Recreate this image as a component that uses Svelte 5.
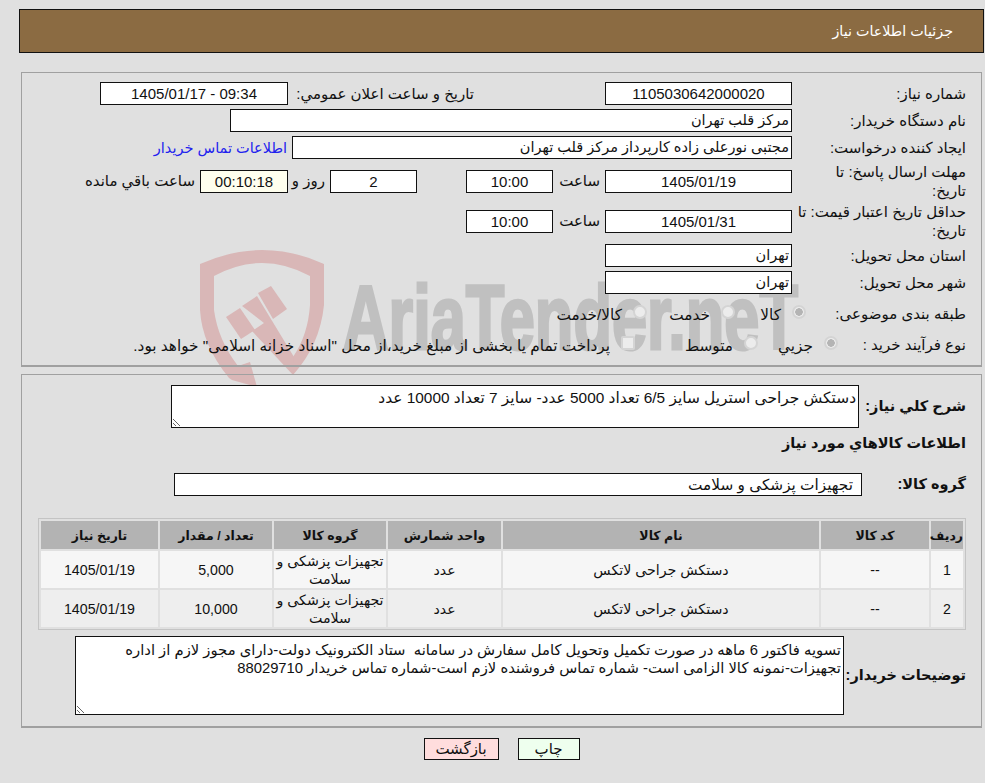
<script>
	const items = [
		{ row: 1, code: '--', name: 'دستکش جراحی لاتکس', unit: 'عدد', group: 'تجهیزات پزشکی و سلامت', qty: '5,000', date: '1405/01/19' },
		{ row: 2, code: '--', name: 'دستکش جراحی لاتکس', unit: 'عدد', group: 'تجهیزات پزشکی و سلامت', qty: '10,000', date: '1405/01/19' }
	];
	const summary = 'دستکش جراحی استریل سایز 6/5 تعداد 5000 عدد- سایز 7 تعداد 10000 عدد';
	const notes = 'تسویه فاکتور 6 ماهه در صورت تکمیل وتحویل کامل سفارش در سامانه  ستاد الکترونیک دولت-دارای مجوز لازم از اداره تجهیزات-نمونه کالا الزامی است- شماره تماس فروشنده لازم است-شماره تماس خریدار 88029710';
</script>

<div class="page">
	<svg class="watermark" width="985" height="783" viewBox="0 0 985 783" aria-hidden="true">
		<g fill="#d9b7b7">
			<path d="M200 264 Q232 250 262 250 Q294 250 324 264 L324 305 Q320 345 293 375 L293 357 Q308 335 310 305 L310 276 Q286 263 262 263 Q238 263 214 276 L214 310 Q218 340 238 366 L250 362 L257 387 L232 380 L229 378 Q202 345 200 310 Z" />
			<path d="M226 317 L240 308 L255 330 L241 339 Z" />
			<path d="M242 306 L257 296 L294 357 L293 375 L252 331 L264 323 Z" />
			<path d="M258 293 L271 286 L287 309 L273 319 Z" />
		</g>
		<text x="343" y="349" class="wm-text" textLength="455" lengthAdjust="spacingAndGlyphs">AriaTender.neT</text>
	</svg>

	<div class="content">
		<header class="topbar">جزئیات اطلاعات نیاز</header>

		<section class="panel first">
			<div class="row h27">
				<div class="label">شماره نیاز:</div>
				<div class="box w187 center">1105030642000020</div>
				<div class="label-inline announce">تاریخ و ساعت اعلان عمومي:</div>
				<div class="box w188 center">09:34 - 1405/01/17</div>
			</div>
			<div class="row h27">
				<div class="label">نام دستگاه خریدار:</div>
				<div class="box buyer">مرکز قلب تهران</div>
			</div>
			<div class="row h27">
				<div class="label">ایجاد کننده درخواست:</div>
				<div class="box creator">مجتبی نورعلی زاده کارپرداز مرکز قلب تهران</div>
				<span class="link">اطلاعات تماس خریدار</span>
			</div>
			<div class="row h40">
				<div class="label">مهلت ارسال پاسخ: تا<br />تاریخ:</div>
				<div class="box w187 center">1405/01/19</div>
				<div class="hour">ساعت</div>
				<div class="box w87 center">10:00</div>
				<div class="spacer"></div>
				<div class="box w87 center">2</div>
				<div class="days">روز و</div>
				<div class="box w88 center remain">00:10:18</div>
				<div class="left">ساعت باقي مانده</div>
			</div>
			<div class="row h40">
				<div class="label">حداقل تاریخ اعتبار قیمت: تا<br />تاریخ:</div>
				<div class="box w187 center">1405/01/31</div>
				<div class="hour">ساعت</div>
				<div class="box w87 center">10:00</div>
			</div>
			<div class="row h28">
				<div class="label">استان محل تحویل:</div>
				<div class="box w187">تهران</div>
			</div>
			<div class="row h27">
				<div class="label">شهر محل تحویل:</div>
				<div class="box w187">تهران</div>
			</div>
			<div class="row h34">
				<div class="label">طبقه بندی موضوعی:</div>
				<div class="choices cat">
					<label><span class="radio on"></span>کالا</label>
					<label><span class="radio"></span>خدمت</label>
					<label><span class="radio"></span>کالا/خدمت</label>
				</div>
			</div>
			<div class="row h28">
				<div class="label">نوع فرآیند خرید :</div>
				<div class="choices proc">
					<label><span class="radio on"></span>جزيي</label>
					<label><span class="radio"></span>متوسط</label>
					<label><span class="check"></span>پرداخت تمام یا بخشی از مبلغ خرید،از محل "اسناد خزانه اسلامی" خواهد بود.</label>
				</div>
			</div>
		</section>

		<section class="panel second">
			<div class="row summary-row">
				<div class="label strong">شرح کلي نیاز:</div>
				<textarea class="area summary" readonly value={summary}></textarea>
			</div>
			<h3 class="goods-title">اطلاعات کالاهاي مورد نیاز</h3>
			<div class="row group-row">
				<div class="label strong">گروه کالا:</div>
				<div class="box group">تجهیزات پزشکی و سلامت</div>
			</div>

			<table class="goods">
				<thead>
					<tr>
						<th class="c1">ردیف</th>
						<th class="c2">کد کالا</th>
						<th class="c3">نام کالا</th>
						<th class="c4">واحد شمارش</th>
						<th class="c5">گروه کالا</th>
						<th class="c6">تعداد / مقدار</th>
						<th class="c7">تاریخ نیاز</th>
					</tr>
				</thead>
				<tbody>
					{#each items as item}
						<tr>
							<td>{item.row}</td>
							<td>{item.code}</td>
							<td>{item.name}</td>
							<td>{item.unit}</td>
							<td>{item.group}</td>
							<td>{item.qty}</td>
							<td>{item.date}</td>
						</tr>
					{/each}
				</tbody>
			</table>

			<div class="row notes-row">
				<div class="label strong">توضیحات خریدار:</div>
				<textarea class="area notes" readonly value={notes}></textarea>
			</div>
		</section>

		<div class="actions">
			<button class="print">چاپ</button>
			<button class="back">بازگشت</button>
		</div>
	</div>
</div>

<style>
	:global(body) {
		background: #e0e0e0;
		font-family: 'Liberation Sans', 'DejaVu Sans', sans-serif;
		font-size: 15px;
		color: #111;
	}
	.page {
		position: relative;
		width: 985px;
		height: 783px;
		overflow: hidden;
	}
	.watermark {
		position: absolute;
		left: 0;
		top: 0;
	}
	.wm-text {
		font-family: 'Liberation Sans', sans-serif;
		font-weight: 700;
		font-size: 90px;
		fill: #c0c0c0;
		stroke: #c0c0c0;
		stroke-width: 3px;
	}
	.content {
		position: relative;
		direction: rtl;
		padding: 9px 1px 0 19px;
	}
	.topbar {
		height: 42px;
		line-height: 42px;
		padding-right: 30px;
		background: #8b6b42;
		border: 1px solid #111;
		color: #fff;
		font-size: 14.3px;
	}
	.panel {
		margin: 0 2px;
		border: 1px solid #a0a0a0;
		border-bottom-width: 2px;
	}
	.first {
		margin-top: 19px;
		height: 285px;
		padding-top: 7px;
	}
	.second {
		margin-top: 7px;
		height: 341px;
		padding-top: 10px;
	}
	.row {
		display: flex;
		align-items: center;
	}
	.h27 { height: 27px; }
	.h28 { height: 28px; }
	.h34 { height: 34px; }
	.h40 { height: 40px; }
	.label {
		box-sizing: border-box;
		width: 189px;
		padding-right: 15px;
		line-height: 19px;
		flex: none;
	}
	.strong {
		font-weight: 700;
		font-size: 14.5px;
	}
	.box {
		box-sizing: border-box;
		height: 23px;
		line-height: 21px;
		padding: 0 2px;
		background: #fff;
		border: 1px solid #111;
		flex: none;
		white-space: nowrap;
		font-size: 14.5px;
	}
	.center {
		text-align: center;
		font-size: 15px;
	}
	.w187 { width: 187px; }
	.w188 { width: 188px; }
	.w87 { width: 87px; }
	.w88 { width: 88px; }
	.buyer { width: 562px; }
	.creator { width: 500px; }
	.remain { background: #ffffee; }
	.announce {
		width: 317px;
		padding-right: 131px;
		box-sizing: border-box;
		flex: none;
		white-space: nowrap;
	}
	.link {
		margin-right: 5px;
		color: #2222ee;
		font-size: 14.5px;
	}
	.hour {
		width: 52px;
		padding-right: 5px;
		box-sizing: border-box;
		flex: none;
	}
	.spacer {
		width: 49px;
		flex: none;
	}
	.days {
		width: 42px;
		padding-right: 5px;
		box-sizing: border-box;
		flex: none;
	}
	.left {
		padding-right: 5px;
		white-space: nowrap;
	}
	.choices {
		display: flex;
		white-space: nowrap;
		font-size: 15.3px;
		padding-top: 4px;
	}
	.choices label {
		display: flex;
		align-items: center;
		gap: 11px;
	}
	.cat {
		margin-right: -14px;
	}
	.cat label:nth-child(1) { width: 71px; }
	.cat label:nth-child(2) { width: 88px; }
	.proc {
		margin-right: -46px;
	}
	.proc label:nth-child(1) { width: 80px; }
	.proc label:nth-child(2) { width: 123px; }
	.radio {
		box-sizing: border-box;
		width: 14px;
		height: 14px;
		border-radius: 50%;
		border: 2px solid #d4d4d4;
		background: #ececec;
		flex: none;
		margin-top: -6px;
	}
	.radio.on {
		background: radial-gradient(circle, #b4b4b4 0 3.5px, #ececec 4px);
	}
	.check {
		box-sizing: border-box;
		width: 14px;
		height: 14px;
		border: 2px solid #d4d4d4;
		background: #ececec;
		border-radius: 2px;
		flex: none;
		margin-top: -6px;
	}
	.summary-row {
		height: 43px;
	}
	.area {
		box-sizing: border-box;
		display: block;
		padding: 1px 2px;
		margin: 0;
		background: #fff;
		border: 1px solid #111;
		border-radius: 0;
		font: inherit;
		line-height: 18px;
		color: #111;
		outline: none;
		flex: none;
		overflow: hidden;
	}
	.summary {
		width: 688px;
		height: 43px;
		margin-right: -67px;
		padding-top: 3px;
		padding-right: 2px;
		font-size: 15.4px;
	}
	.goods-title {
		margin: 3px 15px 0 0;
		height: 25px;
		line-height: 25px;
		font-size: 14.5px;
		font-weight: 700;
	}
	.group-row {
		margin-top: 17px;
		height: 23px;
	}
	.group {
		width: 688px;
		margin-right: -70px;
		padding-right: 8px;
		font-size: 15.3px;
	}
	.goods {
		width: 928px;
		margin: 22px 15px 0 0;
		border: 1px solid #c4c4c4;
		border-spacing: 2px;
		table-layout: fixed;
	}
	.goods th {
		height: 28px;
		padding: 0;
		background: #b3b3b3;
		font-size: 12.5px;
		font-weight: 700;
	}
	.goods td {
		height: 37px;
		padding: 0;
		background: #f6f6f6;
		text-align: center;
		line-height: 18px;
		font-size: 14.2px;
	}
	.goods tr:nth-child(2) td { background: #eeeeee; }
	.c1 { width: 32px; }
	.c2 { width: 108px; }
	.c3 { width: 316px; }
	.c4 { width: 113px; }
	.c5 { width: 112px; }
	.c6 { width: 112px; }
	.c7 { width: 117px; }
	.notes-row {
		margin-top: 6px;
		height: 79px;
	}
	.notes {
		width: 769px;
		height: 79px;
		margin-right: -52px;
		padding-top: 4px;
		padding-right: 2px;
		font-size: 14.8px;
	}
	.actions {
		display: flex;
		justify-content: center;
		gap: 19px;
		margin-top: 10px;
	}
	.actions button {
		box-sizing: border-box;
		height: 22px;
		padding: 0;
		border: 1px solid #111;
		font: inherit;
		color: #111;
	}
	.print {
		width: 62px;
		background: #eeffee;
	}
	.back {
		width: 75px;
		background: #ffdddd;
	}
</style>
